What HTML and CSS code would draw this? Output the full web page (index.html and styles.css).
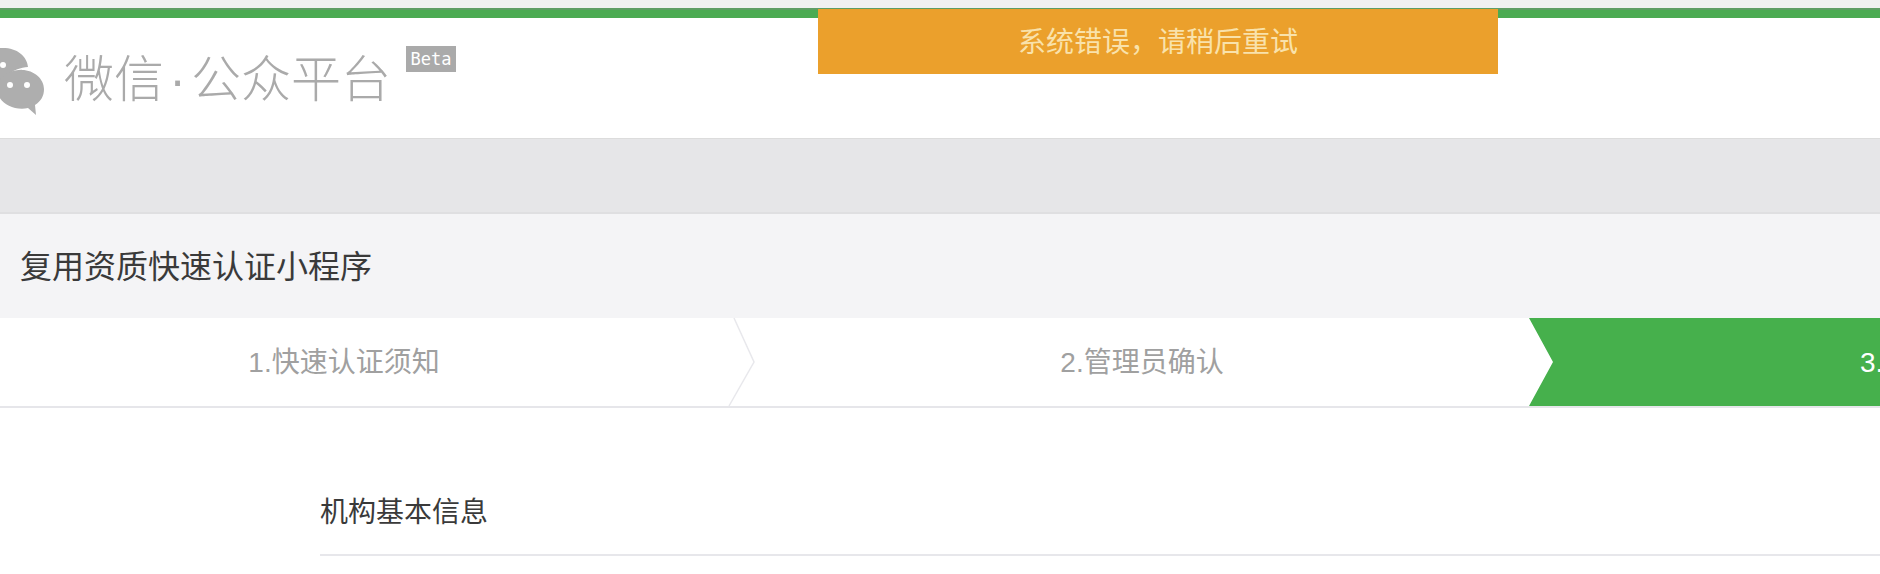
FILE: index.html
```html
<!DOCTYPE html>
<html lang="zh-CN">
<head>
<meta charset="utf-8">
<title>复用资质快速认证小程序</title>
<link rel="stylesheet" href="styles.css">
</head>
<body>
<div class="top-gap"></div>
<div class="top-bar"></div>
<div class="toast">系统错误，请稍后重试</div>
<header class="header">
  <svg class="logo-icon" width="50" height="72" viewBox="0 0 50 72" aria-hidden="true">
    <path class="logo-fill" d="M0 0h3c14 0 24 8 25 19-15 1-27 10-27 24 0 2 0 3 1 4h-2z"/>
    <path class="logo-fill" d="M22 22c12 0 22 9 22 19 0 7-3 12-9 16l1 10-8-7c-2 .6-4 .8-6 .8-14 0-25-9-25-20s11-19 25-19z"/>
    <circle class="logo-eye" cx="3" cy="17" r="3"/>
    <circle class="logo-eye" cx="10" cy="37" r="3"/>
    <circle class="logo-eye" cx="27" cy="37" r="3"/>
  </svg>
  <div class="logo-text"><span>微信</span><span class="logo-dot">·</span><span>公众平台</span></div>
  <span class="beta">Beta</span>
</header>
<div class="nav-band"></div>
<div class="title-band"><h1 class="page-title">复用资质快速认证小程序</h1></div>
<div class="steps">
  <div class="step step-one">1.快速认证须知
    <svg class="step-arrow" width="28" height="88" viewBox="0 0 28 88" aria-hidden="true"><path d="M4 0l20 44L-1 88" /></svg>
  </div>
  <div class="step step-two">2.管理员确认</div>
  <div class="step step-three">3.</div>
</div>
<section class="content">
  <h2 class="section-title">机构基本信息</h2>
</section>
</body>
</html>
```
FILE: styles.css
```css
html, body {
  margin: 0;
  padding: 0;
  height: 574px;
  overflow: hidden;
  background: #fff;
  font-family: "Liberation Sans", "Noto Sans CJK SC", sans-serif;
}

.top-gap {
  height: 8px;
  background: #f1f1f1;
}

.top-bar {
  height: 10px;
  background: #4bab52;
  border-top: 2px solid #5f9e65;
  box-sizing: border-box;
}

.toast {
  position: absolute;
  left: 818px;
  top: 9px;
  width: 680px;
  height: 65px;
  background: #eba02c;
  color: #f9e2ab;
  font-size: 28px;
  line-height: 67px;
  text-align: center;
}

.header {
  height: 120px;
  display: flex;
  align-items: flex-start;
  background: #fff;
}

.logo-icon {
  flex: none;
  margin-top: 30px;
}

.logo-fill {
  fill: #aeaeae;
}

.logo-eye {
  fill: #fff;
}

.logo-text {
  display: flex;
  margin: 28px 0 0 14px;
  color: #aaa;
  font-size: 50px;
  line-height: 68px;
  font-weight: 300;
}

.logo-dot {
  width: 27px;
  text-align: center;
}

.beta {
  margin: 28px 0 0 15px;
  width: 50px;
  height: 26px;
  background: #aaa;
  color: #fff;
  font-family: "DejaVu Sans Mono", monospace;
  font-size: 17px;
  line-height: 26px;
  text-align: center;
}

.nav-band {
  height: 73px;
  background: #e6e6e8;
  border-top: 1px solid #dcdcdc;
  border-bottom: 2px solid #dfdfe1;
}

.title-band {
  height: 100px;
  display: flex;
  align-items: center;
  padding: 0 0 4px 20px;
  background: #f4f4f6;
}

.page-title {
  margin: 0;
  color: #3a3a3a;
  font-size: 32px;
  font-weight: 400;
}

.steps {
  height: 88px;
  display: grid;
  grid-template-columns: 735px 794px 1fr;
  grid-template-rows: 88px;
  border-bottom: 2px solid #e6e6ea;
  box-sizing: content-box;
  background: #fff;
  color: #a0a0a0;
  font-size: 28px;
  line-height: 90px;
}

.step {
  position: relative;
}

.step-one {
  padding-right: 47px;
  text-align: center;
}

.step-arrow {
  position: absolute;
  left: 730px;
  top: 0;
  overflow: visible;
  fill: none;
  stroke: #e8e8ec;
  stroke-width: 1.5;
}

.step-two {
  padding-left: 20px;
  text-align: center;
}

.step-three {
  padding-left: 331px;
  background: #46b04c;
  color: #fff;
  clip-path: polygon(0 0, 100% 0, 100% 100%, 0 100%, 24px 50%);
}

.content {
  padding: 0 0 0 320px;
}

.section-title {
  margin: 0;
  height: 148px;
  box-sizing: border-box;
  border-bottom: 2px solid #e7e7eb;
  padding-top: 87px;
  color: #3a3a3a;
  font-size: 28px;
  line-height: 36px;
  font-weight: 400;
}
```
